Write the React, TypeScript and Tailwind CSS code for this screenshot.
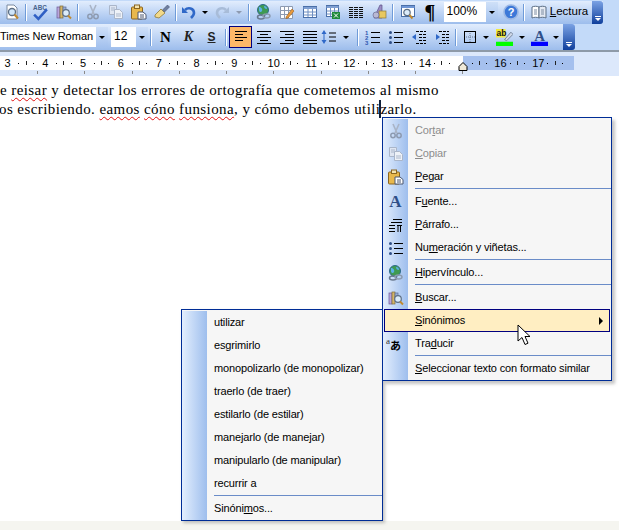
import type { ReactNode } from "react"

const uiFont = "font-['Liberation_Sans',sans-serif]"

// ---- toolbar icons, all on a 16x16 grid ----
function Ico({ children, size = 16 }: { children: ReactNode; size?: number }) {
  return (
    <svg width={size} height={size} viewBox="0 0 16 16" className="block shrink-0">
      {children}
    </svg>
  )
}

const PrintPreview = () => (
  <Ico>
    <path d="M3 1h7l3 3v11H3z" fill="#fff" stroke="#7a8aa0" />
    <circle cx="8" cy="8" r="3.5" fill="#cfe6fa" stroke="#5d6f85" strokeWidth="1.3" />
    <path d="M10.500 10.500l3.500 4" stroke="#c08a30" strokeWidth="2" />
  </Ico>
)
const Spell = () => (
  <Ico size={17}>
    <text x="1" y="6" fontSize="6" fontWeight="700" fontFamily="Liberation Sans" fill="#47628c">ABC</text>
    <path d="M2 10l4 4 8-9" fill="none" stroke="#2f5fc4" strokeWidth="2.4" />
  </Ico>
)
const Research = () => (
  <Ico>
    <rect x="1" y="3" width="3" height="11" fill="#b9a6dc" stroke="#6c5a96" strokeWidth=".7" />
    <rect x="4" y="2" width="3" height="12" fill="#d5b56a" stroke="#7c6a38" strokeWidth=".7" />
    <rect x="7" y="3" width="3" height="7" fill="#9ab0d8" stroke="#5a6c96" strokeWidth=".7" />
    <circle cx="10" cy="9" r="3.300" fill="#dcecfa" stroke="#5d6f85" strokeWidth="1.2" />
    <path d="M12 11.500l3 3" stroke="#c08a30" strokeWidth="2" />
  </Ico>
)
const Cut = () => (
  <Ico>
    <path d="M5 1l4 9M11 1l-4 9" stroke="#a9b4c6" strokeWidth="1.6" fill="none" />
    <circle cx="5" cy="12.500" r="2.200" fill="none" stroke="#8d9ab0" strokeWidth="1.5" />
    <circle cx="11" cy="12.500" r="2.200" fill="none" stroke="#8d9ab0" strokeWidth="1.5" />
  </Ico>
)
const Copy = () => (
  <Ico>
    <path d="M1.500 1.500h7v9h-7z" fill="#dfe6f2" stroke="#aab6ca" />
    <path d="M3 4h4M3 6h4" stroke="#aab6ca" />
    <path d="M6.500 5.500h5l3 3v6h-8z" fill="#eef2f8" stroke="#aab6ca" />
    <path d="M8 10h5M8 12h5" stroke="#aab6ca" />
  </Ico>
)
const Paste = () => (
  <Ico>
    <rect x="0.500" y="3" width="11" height="12" rx="1" fill="#e8b84c" stroke="#8a6520" />
    <rect x="3.500" y="1" width="5" height="3.500" fill="#f4e4b0" stroke="#8a6520" />
    <path d="M7 8h5l3 2.500V15H7z" fill="#fff" stroke="#4a5670" />
    <path d="M9 11h4M9 13h4" stroke="#4a5670" />
  </Ico>
)
const Painter = () => (
  <Ico>
    <path d="M1 11l6-6 4 4-6 5-4-1z" fill="#f2d98a" stroke="#8e7a3a" strokeWidth=".8" />
    <path d="M8.500 6l5-5 2 2-5 5z" fill="#6f7fa0" stroke="#4a5670" strokeWidth=".6" />
  </Ico>
)
const Undo = ({ c }: { c: string }) => (
  <Ico>
    <path d="M4 6c3-3 9-2 9 3 0 2-1 3-3 5" fill="none" stroke={c} strokeWidth="2.6" />
    <path d="M1 3v6h6z" fill={c} />
  </Ico>
)
const Redo = ({ c }: { c: string }) => (
  <Ico>
    <path d="M12 6c-3-3-9-2-9 3 0 2 1 3 3 5" fill="none" stroke={c} strokeWidth="2.6" />
    <path d="M15 3v6H9z" fill={c} />
  </Ico>
)
const Globe = () => (
  <Ico>
    <circle cx="7" cy="6" r="5.500" fill="#3f9a52" stroke="#2d6a8c" />
    <path d="M3 3c2 0 4 2 3 4S3 8 3 6zM8 2c2 0 3 1 3 3-2 0-3-1-3-3z" fill="#5ab0e8" />
    <ellipse cx="5" cy="13" rx="3.500" ry="2" fill="none" stroke="#68788e" strokeWidth="1.5" />
    <ellipse cx="10.500" cy="12" rx="3.500" ry="2" fill="none" stroke="#8c9bb0" strokeWidth="1.5" />
  </Ico>
)
const TableDraw = () => (
  <Ico>
    <path d="M1.500 2.500h12v12h-12zM1.500 6.500h12M1.500 10.500h12M5.500 2.500v12M9.500 2.500v12" fill="#fff" stroke="#8d9ab0" />
    <path d="M7 13l6-8 2 2-6 7-2 .5z" fill="#e89a3c" stroke="#9a5f20" strokeWidth=".6" />
  </Ico>
)
const TableIco = () => (
  <Ico>
    <rect x="1.500" y="2.500" width="13" height="11" fill="#fff" stroke="#4a6fa8" />
    <path d="M1.500 3h13v2h-13z" fill="#7f9fd2" />
    <path d="M1.500 8h13M1.500 11h13M6 5v8M10.500 5v8" stroke="#6f8fc2" />
  </Ico>
)
const Excel = () => (
  <Ico>
    <rect x="1.500" y="1.500" width="12" height="11" fill="#fff" stroke="#4a6fa8" />
    <path d="M1.500 2h12v2h-12z" fill="#7f9fd2" />
    <path d="M1.500 7h12M1.500 10h12M5.500 4v8M9.500 4v8" stroke="#6f8fc2" />
    <rect x="7" y="8" width="8" height="7" fill="#1f8a3c" />
    <path d="M9 9.500l4 4M13 9.500l-4 4" stroke="#fff" />
  </Ico>
)
const Columns = () => (
  <Ico>
    <path d="M1 3.500h14M1 5.500h14M1 7.500h14M1 9.500h14M1 11.500h14M1 13.500h14" stroke="#111" />
    <path d="M5 3h1v11H5zM10 3h1v11h-1z" fill="#c3d6f4" />
  </Ico>
)
const Drawing = () => (
  <Ico>
    <path d="M3 14L9 1h2v13z" fill="#9a8cc4" stroke="#5c5088" strokeWidth=".7" />
    <rect x="8" y="7" width="7" height="7" fill="#e8c860" stroke="#8e7a3a" strokeWidth=".7" />
    <circle cx="5" cy="11" r="3" fill="#b9b9d4" stroke="#6a6a90" strokeWidth=".7" />
  </Ico>
)
const DocMap = () => (
  <Ico>
    <rect x="1.500" y="1.500" width="13" height="11" fill="#fff" stroke="#4a6fa8" />
    <path d="M1.500 2h13v2h-13z" fill="#6f96d6" />
    <circle cx="7" cy="8.500" r="3.200" fill="#dcecfa" stroke="#5d6f85" strokeWidth="1.2" />
    <path d="M9.500 11l3 3.500" stroke="#c08a30" strokeWidth="2" />
  </Ico>
)
const Help = () => (
  <Ico>
    <circle cx="8" cy="8" r="7" fill="#3c78d8" stroke="#9cb8e4" strokeWidth="1.6" />
    <text x="8" y="12" textAnchor="middle" fontSize="11" fontWeight="700" fontFamily="Liberation Sans" fill="#fff">?</text>
  </Ico>
)
const Book = () => (
  <Ico>
    <path d="M1 3c2-1 5-1 7 0v11c-2-1-5-1-7 0z" fill="#fff" stroke="#5d6f85" />
    <path d="M15 3c-2-1-5-1-7 0v11c2-1 5-1 7 0z" fill="#e4e9f2" stroke="#5d6f85" />
    <path d="M3 6h3M3 8h3M3 10h3M10 6h3M10 8h3M10 10h3" stroke="#7a8aa0" />
  </Ico>
)
const Lines = ({ d }: { d: string }) => (
  <Ico>
    <path d={d} stroke="#000" strokeWidth="1" fill="none" />
  </Ico>
)
const LineSpacing = () => (
  <Ico>
    <path d="M3 1L.5 5h5zM3 15l2.500-4h-5z" fill="#2f68c8" />
    <path d="M3 5v6" stroke="#2f68c8" />
    <path d="M8 4h7M8 8h7M8 12h7" stroke="#000" />
  </Ico>
)
const Numbering = () => (
  <Ico>
    <text x="0" y="5.500" fontSize="6" fontWeight="700" fontFamily="Liberation Sans" fill="#2f58b0">1</text>
    <text x="0" y="10.500" fontSize="6" fontWeight="700" fontFamily="Liberation Sans" fill="#2f58b0">2</text>
    <text x="0" y="15.500" fontSize="6" fontWeight="700" fontFamily="Liberation Sans" fill="#2f58b0">3</text>
    <path d="M6 3.500h9M6 8.500h9M6 13.500h9" stroke="#000" />
  </Ico>
)
const Bullets = () => (
  <Ico>
    <circle cx="2.500" cy="3.500" r="1.500" fill="#2f4f88" />
    <circle cx="2.500" cy="8.500" r="1.500" fill="#2f4f88" />
    <circle cx="2.500" cy="13.500" r="1.500" fill="#2f4f88" />
    <path d="M6 3.500h9M6 8.500h9M6 13.500h9" stroke="#000" />
  </Ico>
)
const Outdent = () => (
  <Ico>
    <path d="M5 2.500h10M8 5.500h7M8 8.500h7M8 11.500h7M5 14.500h10" stroke="#000" strokeDasharray="3 1" />
    <path d="M1 8l4-3v6z" fill="#2f68c8" />
  </Ico>
)
const Indent = () => (
  <Ico>
    <path d="M5 2.500h10M8 5.500h7M8 8.500h7M8 11.500h7M5 14.500h10" stroke="#000" strokeDasharray="3 1" />
    <path d="M6 8L2 5v6z" fill="#2f68c8" />
  </Ico>
)
const Border = () => (
  <Ico>
    <rect x="2.500" y="2.500" width="11" height="11" fill="none" stroke="#000" />
    <path d="M8 4v9M4 8h9" stroke="#6a7a90" strokeDasharray="1 1" />
  </Ico>
)
const Highlight = () => (
  <Ico size={17}>
    <rect x="0" y="0" width="9" height="8" fill="#f2ea3c" />
    <text x="0.500" y="7" fontSize="8" fontWeight="700" fontFamily="Liberation Sans" fill="#111">ab</text>
    <path d="M8 10l6-7 2 2-6 6z" fill="#cfd8e8" stroke="#6a7a90" strokeWidth=".8" />
    <rect x="0" y="12" width="16" height="4" fill="#00ff00" />
  </Ico>
)
const FontColor = () => (
  <Ico size={17}>
    <text x="8" y="11" textAnchor="middle" fontSize="14" fontWeight="700" fontFamily="Liberation Serif" fill="#2f4f88">A</text>
    <rect x="0" y="12" width="16" height="4" fill="#0000ff" />
  </Ico>
)
const Translate = () => (
  <div className="flex w-[19px] items-end font-['Noto_Sans_CJK_JP',serif] leading-none text-black">
    <span className="mb-[5px] font-['Liberation_Serif'] text-[9px] text-[#333]">a</span>
    <span className="text-[11px] font-bold">あ</span>
  </div>
)

// ---- toolbar pieces ----
const Cell = ({ w, children }: { w: string; children?: ReactNode }) => (
  <div className={`flex h-full items-center justify-center shrink-0 ${w}`}>{children}</div>
)
const Btn = ({ children }: { children: ReactNode }) => <Cell w="w-[23px]">{children}</Cell>
const Arrow = ({ light, w = "w-[10px]" }: { light?: boolean; w?: string }) => (
  <Cell w={w}>
    <span className={`block border-x-[3px] border-t-[3px] border-x-transparent ${light ? "border-t-[#8d9ab0]" : "border-t-black"}`} />
  </Cell>
)
const Sep = ({ w = "w-[6px]" }: { w?: string }) => (
  <Cell w={w}>
    <span className="block h-[17px] w-[2px] border-r border-white bg-[#6f9bd8]" />
  </Cell>
)
const Combo = ({ w, text, cls }: { w: string; text: string; cls: string }) => (
  <div className={`flex h-[20px] items-stretch bg-white ${w}`}>
    <span className={`flex-1 whitespace-nowrap leading-[18px] text-black ${cls}`}>{text}</span>
    <span className="flex w-[12px] items-center justify-center bg-gradient-to-b from-[#cfe0f8] to-[#a4c2ee]">
      <span className="block border-x-[3px] border-t-[3px] border-x-transparent border-t-black" />
    </span>
  </div>
)
const Chevron = ({ w }: { w: string }) => (
  <div className={`flex h-full shrink-0 flex-col items-center justify-end rounded-r-[3px] bg-gradient-to-b from-[#7ba2e4] to-[#0f3f9c] pb-[3px] ${w}`}>
    <span className="mb-[1px] block h-[1px] w-[6px] bg-white" />
    <span className="block border-x-[3px] border-t-[3px] border-x-transparent border-t-white" />
  </div>
)

// ---- ruler ----
const rulerNumbers = ["3", "4", "5", "6", "7", "8", "9", "10", "11", "12", "13", "14", "", "16", "17"]
const tickPitches = [0, 1, 2, 3, 4, 5, 6, 7, 8, 9]

function RulerCell({ n }: { n: string }) {
  return (
    <div className="flex w-[37.8px] shrink-0 items-center justify-between pr-[7px] text-[11px] leading-none text-black">
      <span className="w-[9px] text-center">{n}</span>
      <span className="h-[1px] w-[1px] bg-black" />
      <span className="h-[4px] w-[1px] bg-[#222]" />
      <span className="h-[1px] w-[1px] bg-black" />
    </div>
  )
}

// ---- menus ----
function MenuRow({ icon, children, disabled, active, arrow }: { icon?: ReactNode; children: ReactNode; disabled?: boolean; active?: boolean; arrow?: boolean }) {
  return (
    <div className="relative flex h-[23px] items-center">
      <div className="flex h-full w-[25px] shrink-0 items-center justify-center bg-gradient-to-r from-[#e3eefd] to-[#9ebeed]">{icon}</div>
      {active && <div className="absolute inset-x-[1px] inset-y-0 border border-[#000080] bg-[#ffeec2]" />}
      <span className={`relative pl-[7px] text-[11px] leading-none tracking-[-0.15px] ${disabled ? "text-[#8d8d8d]" : "text-black"}`}>{children}</span>
      {arrow && <span className="absolute right-[8px] block border-y-[4px] border-l-[4px] border-y-transparent border-l-black" />}
    </div>
  )
}
const MenuSep = () => (
  <div className="flex h-[2px]">
    <div className="w-[25px] shrink-0 bg-gradient-to-r from-[#e3eefd] to-[#9ebeed]" />
    <div className="ml-[7px] h-[1px] flex-1 bg-[#6a8cc8]" />
  </div>
)

const synonyms = [
  "utilizar",
  "esgrimirlo",
  "monopolizarlo (de monopolizar)",
  "traerlo (de traer)",
  "estilarlo (de estilar)",
  "manejarlo (de manejar)",
  "manipularlo (de manipular)",
  "recurrir a",
]

const Wavy = ({ children }: { children: ReactNode }) => (
  <span className="underline decoration-[#e01010] decoration-wavy decoration-1 underline-offset-2">{children}</span>
)

export default function App() {
  return (
    <div className={`relative h-[530px] w-[619px] overflow-hidden bg-white ${uiFont}`}>
      {/* toolbars */}
      <div className="bg-[#c3daf9]">
        <div className="flex h-[24px] items-center pr-[16px]">
          <div className="flex h-[23px] w-[603px] items-center rounded-br-[3px] bg-gradient-to-b from-[#e2edfd] to-[#9dbdec]">
            <Cell w="w-[23px]"><PrintPreview /></Cell>
            <Sep />
            <Btn><Spell /></Btn>
            <Btn><Research /></Btn>
            <Sep />
            <Btn><Cut /></Btn>
            <Btn><Copy /></Btn>
            <Btn><Paste /></Btn>
            <Btn><Painter /></Btn>
            <Sep />
            <Cell w="w-[20px]"><Undo c="#2f68c8" /></Cell>
            <Arrow w="w-[12px]" />
            <Cell w="w-[22px]"><Redo c="#a8bcd8" /></Cell>
            <Arrow light w="w-[12px]" />
            <Sep w="w-[7px]" />
            <Btn><Globe /></Btn>
            <Btn><TableDraw /></Btn>
            <Btn><TableIco /></Btn>
            <Btn><Excel /></Btn>
            <Btn><Columns /></Btn>
            <Btn><Drawing /></Btn>
            <Sep />
            <Btn><DocMap /></Btn>
            <Cell w="w-[22px]"><span className="font-['Liberation_Serif'] text-[20px] font-bold leading-none text-black">¶</span></Cell>
            <Cell w="w-[59px]"><Combo w="w-[54px]" text="100%" cls="pl-[3px] text-[12px]" /></Cell>
            <Cell w="w-[21px]"><Help /></Cell>
            <Sep />
            <Cell w="w-[65px]">
              <span className="flex items-center gap-[3px] text-[11.500px] text-black"><Book /><span><u>L</u>ectura</span></span>
            </Cell>
            <Chevron w="w-[11px] ml-auto" />
          </div>
        </div>
        <div className="flex h-[26px] items-center">
          <div className="flex h-[26px] w-[575px] items-center rounded-r-[3px] bg-gradient-to-b from-[#e2edfd] to-[#9dbdec]">
            <Combo w="w-[108px]" text="Times New Roman" cls="text-[11px]" />
            <div className="w-[3px]" />
            <Combo w="w-[37px]" text="12" cls="pl-[3px] text-[12px]" />
            <Sep />
            <Btn><span className="font-['Liberation_Serif'] text-[15px] font-bold leading-none text-black">N</span></Btn>
            <Btn><span className="font-['Liberation_Serif'] text-[14px] font-bold italic leading-none text-[#222]">K</span></Btn>
            <Btn><span className="font-['Liberation_Sans'] text-[12px] font-bold leading-none text-[#222] underline">S</span></Btn>
            <Sep />
            <div className="flex h-[22px] w-[23px] shrink-0 items-center justify-center border border-[#000080] bg-[#fdb868]">
              <Lines d="M2 2.500h12M2 5.500h8M2 8.500h12M2 11.500h8" />
            </div>
            <Btn><Lines d="M1 2.500h14M4 5.500h8M1 8.500h14M4 11.500h8M1 14.500h14" /></Btn>
            <Btn><Lines d="M1 2.500h14M6 5.500h9M1 8.500h14M6 11.500h9M1 14.500h14" /></Btn>
            <Btn><Lines d="M1 2.500h14M1 5.500h14M1 8.500h14M1 11.500h14M1 14.500h14" /></Btn>
            <Cell w="w-[16px]"><LineSpacing /></Cell>
            <Arrow w="w-[18px]" />
            <Sep />
            <Btn><Numbering /></Btn>
            <Btn><Bullets /></Btn>
            <Btn><Outdent /></Btn>
            <Btn><Indent /></Btn>
            <Sep />
            <Cell w="w-[22px]"><Border /></Cell>
            <Arrow />
            <Cell w="w-[26px]"><Highlight /></Cell>
            <Arrow />
            <Cell w="w-[24px]"><FontColor /></Cell>
            <Arrow />
            <Chevron w="w-[12px] ml-auto" />
          </div>
        </div>
      </div>
      <div className="h-[2px] bg-[#8e9aa8]" />

      {/* ruler */}
      <div className="relative h-[24px] bg-[#dce8fb] pt-[4px]">
        <div className="flex h-[14px] w-[574px] bg-gradient-to-r from-white from-[463px] to-[#a5c0ee] to-[463px] pl-[3px]">
          {rulerNumbers.map((n, i) => (
            <RulerCell key={i} n={n} />
          ))}
        </div>
        <div className="mt-[1px] flex h-[3px] pl-[37px]">
          {tickPitches.map((t) => (
            <div key={t} className="w-[47.25px] shrink-0 border-l border-[#8a8a8a]" />
          ))}
        </div>
        {/* indent marker */}
        <svg width="10" height="9" viewBox="0 0 10 9" className="absolute left-[458px] top-[10px]">
          <path d="M5 .5l4 4v4H1v-4z" fill="#efe9d8" stroke="#000" />
        </svg>
      </div>

      {/* page text */}
      <div className="whitespace-nowrap pt-[5px] font-['Liberation_Serif'] text-[15px] leading-[19px] tracking-[0.42px] text-black">
        <p>e <Wavy>reisar</Wavy> y detectar los errores de ortografía que cometemos al mismo</p>
        <p className="-ml-[1px]">os escribiendo. <Wavy>eamos</Wavy> <Wavy>cóno</Wavy> <Wavy>funsiona</Wavy>, y cómo debemos utilizarlo.</p>
      </div>
      <div className="absolute left-[379px] top-[100px] h-[18px] w-[2px] bg-[#10203a]" />

      {/* page end */}
      <div className="absolute inset-x-0 bottom-0 h-[9px] bg-[#f5f5f0]" />

      {/* synonyms submenu */}
      <div className="absolute left-[181px] top-[309px] w-[202px] border border-[#002d96] bg-[#f6f6f6] pt-[1px] shadow-[2px_2px_3px_rgba(90,90,90,0.35)]">
        {synonyms.map((s) => (
          <MenuRow key={s}>{s}</MenuRow>
        ))}
        <MenuSep />
        <MenuRow>Sinóni<u>m</u>os...</MenuRow>
      </div>

      {/* context menu */}
      <div className="absolute left-[382px] top-[117px] w-[230px] border border-[#002d96] bg-[#f6f6f6] pt-[1px] shadow-[3px_3px_3px_rgba(90,90,90,0.35)]">
        <MenuRow disabled icon={<Cut />}>Cor<u>t</u>ar</MenuRow>
        <MenuRow disabled icon={<Copy />}><u>C</u>opiar</MenuRow>
        <MenuRow icon={<Paste />}><u>P</u>egar</MenuRow>
        <MenuSep />
        <MenuRow icon={<span className="font-['Liberation_Serif'] text-[17px] font-bold leading-none text-[#2f4f88]">A</span>}>F<u>u</u>ente...</MenuRow>
        <MenuRow icon={<Lines d="M5 2.500h9M3 5.500h11M1 8.500h6M1 11.500h6M1 14.500h6M10 8v7M12.500 8v7M9 8.500h5" />}><u>P</u>árrafo...</MenuRow>
        <MenuRow icon={<Bullets />}>Nu<u>m</u>eración y viñetas...</MenuRow>
        <MenuSep />
        <MenuRow icon={<Globe />}><u>H</u>ipervínculo...</MenuRow>
        <MenuSep />
        <MenuRow icon={<Research />}><u>B</u>uscar...</MenuRow>
        <MenuRow active arrow><u>S</u>inónimos</MenuRow>
        <MenuRow icon={<Translate />}>Tra<u>d</u>ucir</MenuRow>
        <MenuSep />
        <MenuRow><u>S</u>eleccionar texto con formato similar</MenuRow>
      </div>

      {/* mouse pointer */}
      <svg width="14" height="22" viewBox="0 0 14 22" className="absolute left-[517px] top-[324px]">
        <path d="M1 1v16l4-3.500 3 7 3-1.300-3-6.700h5z" fill="#fff" stroke="#000" strokeWidth="1" />
      </svg>
    </div>
  )
}
